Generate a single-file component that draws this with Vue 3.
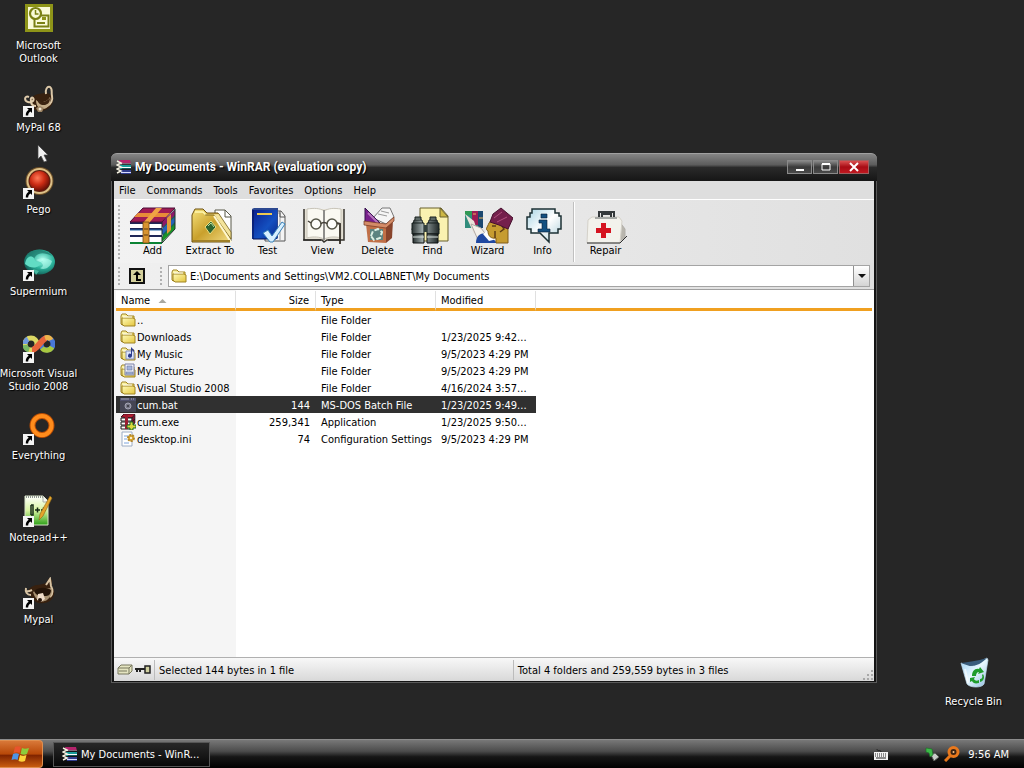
<template>
  <div class="screen">
    <!-- Shared icon shapes -->
    <svg class="sprite" aria-hidden="true">
      <defs>
        <linearGradient id="g-folder" x1="0" y1="0" x2="1" y2="1">
          <stop offset="0" stop-color="#fffbb8" /><stop offset="1" stop-color="#e3c43c" />
        </linearGradient>
        <linearGradient id="g-gold" x1="0" y1="0" x2="1" y2="1">
          <stop offset="0" stop-color="#f6e27c" /><stop offset=".5" stop-color="#c9a02c" /><stop offset="1" stop-color="#f2dc84" />
        </linearGradient>
        <linearGradient id="g-blue" x1="0" y1="0" x2="1" y2="1">
          <stop offset="0" stop-color="#0a1c8c" /><stop offset=".6" stop-color="#1450c0" /><stop offset="1" stop-color="#0a2a8c" />
        </linearGradient>
        <radialGradient id="g-red" cx=".4" cy=".35" r=".7">
          <stop offset="0" stop-color="#ff7a58" /><stop offset=".5" stop-color="#cc2c14" /><stop offset="1" stop-color="#5c0c04" />
        </radialGradient>
        <radialGradient id="g-teal" cx=".6" cy=".4" r=".7">
          <stop offset="0" stop-color="#b4fff0" /><stop offset=".5" stop-color="#2cb49c" /><stop offset="1" stop-color="#0c4c48" />
        </radialGradient>
        <linearGradient id="g-green" x1="0" y1="0" x2="0" y2="1">
          <stop offset="0" stop-color="#ffffff" /><stop offset=".5" stop-color="#d8f4a0" /><stop offset="1" stop-color="#2ca018" />
        </linearGradient>
        <linearGradient id="g-info" x1="0" y1="0" x2="1" y2="1">
          <stop offset="0" stop-color="#a8d4e4" /><stop offset=".5" stop-color="#ffffff" /><stop offset="1" stop-color="#a8ccd8" />
        </linearGradient>
        <linearGradient id="g-metal" x1="0" y1="0" x2="1" y2="0">
          <stop offset="0" stop-color="#2c3434" /><stop offset=".4" stop-color="#a0acac" /><stop offset="1" stop-color="#202828" />
        </linearGradient>
        <linearGradient id="g-bin" x1="0" y1="0" x2="1" y2="1">
          <stop offset="0" stop-color="#9cd0f4" /><stop offset=".5" stop-color="#e8f8ff" /><stop offset="1" stop-color="#8cb8dc" />
        </linearGradient>
      </defs>

      <!-- desktop icons, 32x32 -->
      <symbol id="outlook" viewBox="0 0 32 32">
        <rect x="2" y="1" width="28" height="28" fill="#8e9418" />
        <rect x="5" y="4" width="22" height="22" fill="#fafad8" />
        <rect x="11.500" y="12.500" width="14" height="11" fill="#fafad8" stroke="#7a8014" stroke-width="2" />
        <rect x="19" y="14" width="4" height="3" fill="#8e9418" />
        <path d="M14 20h8" stroke="#7a8014" stroke-width="2" />
        <circle cx="12.500" cy="10.500" r="5.500" fill="#fafad8" stroke="#7a8014" stroke-width="2.200" />
        <path d="M12.500 7v4h3" fill="none" stroke="#7a8014" stroke-width="1.500" />
      </symbol>
      <symbol id="raccoon" viewBox="0 0 32 32">
        <path d="M8 13c5-5 10-4 14-5 5 0 9 3 8 8-1 7-8 11-16 10-5-2-8-7-6-13z" fill="#38210f" />
        <path d="M23 9c-1-4 1-8 4-7 3 2 1 5 2 9 1 4-1 8-5 10" fill="none" stroke="#dcc8a8" stroke-width="2" />
        <path d="M6 12c-5-2-5 4-1 5 4 1 7-2 5-4-1-1-3 0-2 3 0 3 2 5 5 5" fill="none" stroke="#e0ccac" stroke-width="2" />
        <path d="M13 15c5 4 11 2 14-3 2 6-2 12-7 12-4 0-7-3-7-9z" fill="#c4ac88" />
        <path d="M14 14c4 5 9 3 13-1 0 5-3 7-6 7-4 0-6-2-7-6z" fill="#3c2412" />
        <path d="M13 23l4-2 4 2-2 4h-4z" fill="#9c8464" /><circle cx="17" cy="24" r="1.500" fill="#f0e4d0" />
      </symbol>
      <symbol id="raccoon-dark" viewBox="0 0 32 32">
        <path d="M6 12c6-6 11-3 17-6l3-5 3 2v7c4 5 2 10-1 13-4 4-11 4-15 2-4-3-7-7-7-13z" fill="#38210f" />
        <path d="M23 8l4-6 1 7c2 4 2 8-1 11" fill="none" stroke="#d8c4a4" stroke-width="2" />
        <path d="M3 11c-1 4 1 7 5 7M3 14c3 1 4 0 6-1" fill="none" stroke="#d8c4a4" stroke-width="2" />
        <path d="M10 15c6-5 15-3 18-4 2 5 0 9-4 12-5 3-11 2-14-8z" fill="#a89070" />
        <path d="M11 14c5-4 12-4 17-1 0 5-3 6-6 6-4 0-8 1-11-5z" fill="#241408" />
        <path d="M15 17l5-1 2 6-4 3-4-2z" fill="#f0dcc8" /><circle cx="17" cy="23" r="2" fill="#241408" />
      </symbol>
      <symbol id="pego" viewBox="0 0 32 32">
        <circle cx="16.500" cy="14" r="14" fill="#6e5028" /><circle cx="16.500" cy="14" r="13" fill="#dcc088" />
        <circle cx="16.500" cy="14" r="11" fill="#5c2010" /><circle cx="16.500" cy="14" r="10" fill="url(#g-red)" />
      </symbol>
      <symbol id="supermium" viewBox="0 0 32 32">
        <ellipse cx="16.500" cy="13" rx="15.500" ry="12.500" fill="url(#g-teal)" />
        <path d="M4 5C10 0 23-1 29 7c-8-4-15-4-18 3z" fill="#1f7468" opacity=".7" />
        <path d="M2 15c1-8 7-9 9-6 1 4 4 5 9 3-3 7-11 9-18 3z" fill="#62dcc4" />
        <path d="M13 11c6-3 12-2 16 1-2 8-9 9-12 7 4-1 5-5-4-8z" fill="#b8fff0" opacity=".6" />
        <path d="M10 20l6 2-3 4" fill="#48b8a0" />
      </symbol>
      <symbol id="vstudio" viewBox="0 0 32 32">
        <circle cx="8" cy="13" r="6" fill="none" stroke="#dcd864" stroke-width="5" />
        <path d="M2 13a6 6 0 0 1 3-5" stroke="#7098dc" stroke-width="5" fill="none" />
        <path d="M2 14a6 6 0 0 0 4 5" stroke="#78b864" stroke-width="5" fill="none" />
        <circle cx="24" cy="13" r="6" fill="none" stroke="#4878d8" stroke-width="5" />
        <path d="M29 16a6 6 0 0 1-10 1" fill="none" stroke="#a8c840" stroke-width="5" />
        <path d="M9 19c5 0 10-12 15-12" fill="none" stroke="#e8643c" stroke-width="6" />
        <path d="M22 7c3-1 5 0 6 2" fill="none" stroke="#ecb44c" stroke-width="5" />
      </symbol>
      <symbol id="everything" viewBox="0 0 32 32">
        <circle cx="19" cy="12.500" r="9.500" fill="none" stroke="#b84c04" stroke-width="6" />
        <circle cx="19" cy="12.500" r="9.500" fill="none" stroke="#ff8c1c" stroke-width="4" />
      </symbol>
      <symbol id="notepad" viewBox="0 0 32 32">
        <path d="M2 1h18l5 5v24H2z" fill="url(#g-green)" stroke="#d8e4c8" />
        <path d="M3 2h17" stroke="#909890" stroke-width="2" stroke-dasharray="1 1" />
        <path d="M20 1v6h5" fill="#f4f4f4" stroke="#a8b0a0" />
        <path d="M8 10v10M8 10h2v10h-2" stroke="#182c18" stroke-width="1.500" fill="none" />
        <path d="M12 15h5M14.500 12.500v5M18 15h5M20.500 12.500v5" stroke="#142814" stroke-width="1.500" />
        <path d="M27 1l2 2-9 18-4 4 1-6z" fill="#e4a42c" stroke="#8c6818" stroke-width=".6" />
      </symbol>
      <symbol id="shortcut" viewBox="0 0 11 11">
        <path d="M0 0h11v11H0z" fill="#f4f4f4" />
        <path d="M4 2h5v5L7.500 5.500C6 6.500 5 8 5.200 9.500H2.800C2.500 7 4 5 5.700 3.800z" fill="#000" />
      </symbol>
      <symbol id="recycle" viewBox="0 0 32 32">
        <path d="M3 6l9 3c7 0 10-5 17-8l1 2-4 24c-2 4-14 4-17 0z" fill="url(#g-bin)" stroke="#c4e0f0" stroke-width=".7" />
        <path d="M3 6c7-1 16-2 26-5-5 5-10 8-17 8z" fill="#385c7c" />
        <path d="M14 19c0-5 3-8 7-7l1-2 4 5-6 2 1-2c-2 0-3 2-3 4zM25 17c2 3 1 7-3 8v-3c2 0 3-2 2-4zM12 21l5-1-1 2c1 2 3 2 5 1v3c-4 1-6 0-7-2l-2 1z" fill="#1f9c2c" />
        <path d="M7 12l3 14" stroke="#fff" stroke-width="2" opacity=".6" />
      </symbol>

      <!-- toolbar icons, 50x38 -->
      <symbol id="tb-add" viewBox="0 0 50 38">
        <path d="M35 33l12-13V3L35 16z" fill="#1c6450" />
        <path d="M2 30h33v7H2zM2 23h33v7H2zM2 16h33v7H2z" fill="#fff" />
        <path d="M34 36l13-13v-5L34 31" fill="#189428" /><path d="M34 29l13-13v-5L34 23z" fill="#2460b8" /><path d="M34 22L47 9V4L34 16z" fill="#8c1868" />
        <path d="M2 17h32M2 23h32M2 30h32" stroke="#202858" stroke-width="2" />
        <path d="M2 24h32" stroke="#2468a8" stroke-width="1" /><path d="M2 37h32" stroke="#0c8434" stroke-width="2" />
        <path d="M2 16L15 2h32L34 16z" fill="#a01c54" stroke="#4c0c38" />
        <path d="M6 11h32l4-4H10z" fill="#e88c38" />
        <path d="M15 17L28 2h6L21 17z" fill="#f0a444" /><path d="M15 16h6v21h-6z" fill="#d89430" stroke="#784810" stroke-width=".8" />
        <path d="M39 12l4-4v16l-4 4z" fill="#e09838" /><path d="M34 16v21M34 37L47 23V3" fill="none" stroke="#20302c" />
        <path d="M16 23h4M16 29h4" stroke="#5c3c10" />
      </symbol>
      <symbol id="tb-extract" viewBox="0 0 50 38">
        <path d="M30 4h10l6 6v25H30z" fill="#fff" stroke="#585848" /><path d="M40 4v7h6" fill="none" stroke="#585848" />
        <path d="M7 9l3-6h8l4 4h11l12 21v8H7z" fill="url(#g-gold)" stroke="#6c5010" />
        <path d="M10 6h8l3 3" fill="none" stroke="#fff8b0" stroke-width="1.500" />
        <path d="M20 9h9l17 24v-7L34 8" fill="#f4e49c" stroke="#74601c" stroke-width=".8" />
        <path d="M46 36L29 10" stroke="#fff8d0" stroke-width="2" />
        <path d="M20 21l6-6 5 6-6 7z" fill="#2c6430" stroke="#e8dc80" /><path d="M23 20l3-3 3 4" stroke="#b8dc9c" fill="none" />
        <path d="M8 35h37" stroke="#a08028" stroke-width="2" />
      </symbol>
      <symbol id="tb-test" viewBox="0 0 50 38">
        <path d="M22 5h16l4 5v25H22z" fill="#f4f4f4" stroke="#555" /><path d="M27 7h10v27" fill="none" stroke="#999" /><path d="M37 5v6h5" fill="none" stroke="#555" />
        <path d="M9 3h25v30H9z" fill="url(#g-blue)" /><path d="M9 3l2-1h24v30l-1 1V4H9" fill="#2c4890" />
        <path d="M14 8h15" stroke="#ecc850" stroke-width="2" /><path d="M10 4v29h23" fill="none" stroke="#071050" />
        <path d="M20 27l5-3 4 6 10-14 3 2-12 18h-3z" fill="#d8f0ff" stroke="#3880b8" />
      </symbol>
      <symbol id="tb-view" viewBox="0 0 50 38">
        <path d="M6 3v31h18l2 2 3-2h17V3" fill="#e4e0d4" stroke="#35322d" stroke-width="1.500" />
        <path d="M9 3c7-1 13-1 17 2v28c-4-2-10-3-17-1zM43 3c-7-1-12-1-17 2v28c5-2 10-3 17-1z" fill="#faf9f2" stroke="#c8c4b8" />
        <path d="M26 4v30" stroke="#777" stroke-width="1.500" />
        <circle cx="18" cy="18" r="5" fill="#fff" fill-opacity=".6" stroke="#555548" stroke-width="1.500" />
        <circle cx="34" cy="18" r="5" fill="#fff" fill-opacity=".6" stroke="#555548" stroke-width="1.500" />
        <path d="M23 18c1-2 5-2 6 0M13 17l-3-2" fill="none" stroke="#454038" stroke-width="1.500" />
        <path d="M39 17l3 1v20" fill="none" stroke="#454038" stroke-width="2" />
        <path d="M5 34h18M30 34h13" stroke="#161616" />
      </symbol>
      <symbol id="tb-delete" viewBox="0 0 50 38">
        <path d="M20 12L29 2h8l4 9-8 7z" fill="#f5f5f5" stroke="#777" /><path d="M28 5l8 2M25 8l9 2" stroke="#999" />
        <path d="M12 18V2l15 15z" fill="#78208c" stroke="#34104c" /><path d="M15 7l10 10" stroke="#b474bc" stroke-width="2" />
        <path d="M13 18l20 2v17l-18-1z" fill="#c07048" /><path d="M33 20l7-6-1 18-6 5z" fill="#88442c" />
        <path d="M11 15l22 3 8-7v4l-8 7-22-3z" fill="#d48c68" stroke="#743820" stroke-width=".7" />
        <path d="M17 23h13v11H17z" fill="#5c8480" /><path d="M18 30l2-5 5-2 4 3-2 6-6 2z" fill="none" stroke="#ddf0e4" stroke-width="2" stroke-dasharray="5 2" />
      </symbol>
      <symbol id="tb-find" viewBox="0 0 50 38">
        <path d="M12 2h21l7 8v25H12z" fill="#faf2b0" stroke="#69602c" /><path d="M32 2v9h8z" fill="#cdb744" stroke="#69602c" />
        <path d="M6 14h8l2 10H4zM21 14h8l2 10H19z" fill="url(#g-metal)" stroke="#18201f" />
        <path d="M7 14v-3h6v3M22 14v-3h6v3" fill="#5b6765" stroke="#18201f" />
        <path d="M4 17h12v11H4zM19 17h12v11H19z" fill="url(#g-metal)" stroke="#17201e" /><path d="M16 19h3v7h-3z" fill="#323f3c" />
        <path d="M5 28h11v9H5zM19 28h11v9H19z" fill="url(#g-metal)" stroke="#0b0f0f" /><path d="M5 31h11M19 31h11" stroke="#dce4df" />
      </symbol>
      <symbol id="tb-wizard" viewBox="0 0 50 38">
        <path d="M2 5h18v17H2z" fill="#308c7c" /><path d="M2 5h7v4H2z" fill="#309854" /><path d="M9 5h6v14H9z" fill="#9c1c54" /><path d="M15 5h5v17h-5z" fill="#1c4870" /><path d="M10 8h3M16 12h4" stroke="#ecb458" />
        <path d="M2 8l9 20 3-4-3-9z" fill="#eae2da" /><path d="M8 18l10 4 6 8-9 4z" fill="#f4f0ea" stroke="#b0a8a4" />
        <path d="M13 37c0-9 7-11 13-9l8 9z" fill="#2048a0" /><path d="M20 28l9-7 5 12-8 2z" fill="#fff" />
        <path d="M26 17c-2 5-4 6-1 8 0 5 3 8 8 7v5h12V15l-14-4z" fill="#c69c30" stroke="#805c18" />
        <path d="M29 20h4M32 25v7M38 18l3 5-4 3" stroke="#5c3c14" stroke-width="1.500" fill="none" />
        <path d="M27 16l3-8 8-6 12 10-5 11-9-4z" fill="#74204c" stroke="#46102e" /><path d="M31 12l8-6M34 16l10-5" stroke="#b0507c" stroke-width="1" />
      </symbol>
      <symbol id="tb-info" viewBox="0 0 50 38">
        <path d="M14 7V3h23v4h4v3h2v13h-3v4h-9v9l-9-9h-9v-4H9V11h3V7z" fill="url(#g-info)" stroke="#1c3034" stroke-width="1.500" />
        <path d="M23 8h6v4h-6zM21 14h8v9h3v3H20v-3h4v-6h-3z" fill="#145080" stroke="#081c34" stroke-width=".6" />
      </symbol>
      <symbol id="tb-repair" viewBox="0 0 50 38">
        <path d="M38 15l6 8v8l-7 6z" fill="#b9b6ae" stroke="#b0aea8" /><path d="M7 14l4-3h27l3 4-2 22H6z" fill="#f3f2ec" stroke="#d4d1c9" />
        <path d="M18 11V6h15v5M21 11V8h9v3" fill="none" stroke="#33383a" stroke-width="2" />
        <path d="M14 12h22" stroke="#a4a7a4" stroke-width="2" /><path d="M6 37h33l7-7" stroke="#2d2d2d" stroke-width="1" fill="none" />
        <path d="M20 17h5v5h5v5h-5v5h-5v-5h-5v-5h5z" fill="#d51420" />
      </symbol>

      <!-- small icons, 16x16 -->
      <symbol id="winrar" viewBox="0 0 16 16">
        <path d="M3 1h11l1 4H4z" fill="#b4246c" /><path d="M4 4h11v1H4z" fill="#f4c4d8" />
        <path d="M4 6h11v4H4z" fill="#189c98" /><path d="M5 8h10v1H5z" fill="#fff" />
        <path d="M4 11h11v4H5z" fill="#303c8c" /><path d="M5 13h10v1H5z" fill="#d8dcff" />
        <path d="M1 2l4 2-4 2 4 2-4 2 4 2-4 2" fill="none" stroke="#f4f0e0" stroke-width="1.500" /><path d="M6 5h9M6 10h9" stroke="#101018" />
      </symbol>
      <symbol id="folder" viewBox="0 0 16 16">
        <path d="M1 4l1-2h4l2 2h6v9H2l-1-1z" fill="url(#g-folder)" stroke="#a08424" /><path d="M2 6h11l2 1v7H4l-2-2z" fill="url(#g-folder)" stroke="#a08424" /><path d="M3 5h9" stroke="#fff" />
      </symbol>
      <symbol id="music" viewBox="0 0 16 16">
        <use href="#folder" /><path d="M6 5h8v8H6z" fill="#dce4fc" stroke="#8490b8" /><path d="M11 10V1l3 3v2l-2-2v6a2 2 0 1 1-1-2z" fill="#2c3c8c" />
      </symbol>
      <symbol id="pictures" viewBox="0 0 16 16">
        <use href="#folder" /><path d="M5 1h9v11H5z" fill="#eef0fc" stroke="#7c80a4" /><path d="M7 3h5v4H7zM6 9h7v2H6z" fill="#a4b4dc" stroke="#6c789c" stroke-width=".6" />
      </symbol>
      <symbol id="bat" viewBox="0 0 16 16">
        <path d="M0 1h16v14H0z" fill="#454554" /><path d="M0 1h16v3H0z" fill="#50506c" /><path d="M1 2h8" stroke="#9c9cac" /><path d="M11 2h4" stroke="#acacbc" stroke-dasharray="1 1" />
        <circle cx="8" cy="9" r="3" fill="#787888" stroke="#a4a4b4" /><circle cx="8" cy="9" r="1" fill="#303038" />
      </symbol>
      <symbol id="exe" viewBox="0 0 16 16">
        <path d="M1 3l3-3h11l-3 4z" fill="#b81c30" stroke="#44081c" /><path d="M1 4h11v3H1zM1 8h11v3H1zM1 12h11v3H1z" fill="#fff" stroke="#1c1c1c" />
        <path d="M12 4l3-3v4l-3 3zM12 8l3-3v4l-3 3z" fill="#7c1430" stroke="#1c1c1c" stroke-width=".6" /><path d="M5 1h3v14H5z" fill="#9c1c30" />
        <path d="M7 11h3V8h3v3h3v3h-3v2h-3v-2H7z" fill="#dcd83c" stroke="#1c6c20" />
      </symbol>
      <symbol id="ini" viewBox="0 0 16 16">
        <path d="M2 1h10v14H2z" fill="#fff" stroke="#9cacc4" /><path d="M4 5h5M4 8h3M4 12h5" stroke="#7ca4dc" />
        <circle cx="11" cy="7" r="3" fill="#dca82c" stroke="#b4882c" stroke-dasharray="2 1" stroke-width="2" /><circle cx="11" cy="7" r="1" fill="#fff" />
      </symbol>
      <symbol id="magnifier" viewBox="0 0 16 16">
        <circle cx="9.500" cy="6" r="4.500" fill="#3c2414" stroke="#e8781c" stroke-width="3" /><path d="M6 10l-5 5" stroke="#e8781c" stroke-width="3" /><circle cx="9.500" cy="6" r="1" fill="#ffc484" />
      </symbol>
      <symbol id="usb" viewBox="0 0 14 14">
        <path d="M6 8l4-2 4 4-5 4z" fill="#c8ccc8" stroke="#585c58" /><path d="M1 1l6 1 1 6-3 2-1-4-3-1z" fill="#3cb848" stroke="#186c24" stroke-width=".6" />
      </symbol>
      <symbol id="keyboard" viewBox="0 0 16 12">
        <path d="M8 4c0-3-4 0-4-3" fill="none" stroke="#222" /><path d="M1 4h14v8H1z" fill="#f2f2f2" />
        <path d="M2 6h12M2 8h12" stroke="#222" stroke-dasharray="1 1" /><path d="M3 10h10" stroke="#222" />
      </symbol>
      <symbol id="flag" viewBox="0 0 20 20">
        <path d="M4 3c2-1 4-1 6 0L8.500 9C7 8 5 8 2.500 9z" fill="#e8542c" /><path d="M11 4c2 1 4 1 7 0l-2 6c-2 1-4 1-6.500 0z" fill="#8ccc3c" />
        <path d="M2 10c2-1 4-1 6 0l-1.500 6C5 15 3 15 .500 16z" fill="#4c94e8" /><path d="M9 11c2 1 4 1 6.500 0L14 17c-2 1-4 1-6.500 0z" fill="#fcd43c" />
      </symbol>
    </svg>

    <main class="desktop">
      <div class="shortcuts">
        <a v-for="item in shortcuts" :key="item.name" class="shortcut" href="#" @click.prevent>
          <span class="shortcut-picture">
            <svg class="icon-large"><use :href="'#' + item.icon" /></svg>
            <svg v-if="item.link" class="arrow"><use href="#shortcut" /></svg>
          </span>
          <span class="shortcut-name">{{ item.name }}</span>
        </a>
      </div>

      <a class="shortcut recycle-bin" href="#" @click.prevent>
        <span class="shortcut-picture"><svg class="icon-large"><use href="#recycle" /></svg></span>
        <span class="shortcut-name">Recycle Bin</span>
      </a>

      <section class="window">
        <header class="titlebar">
          <svg class="icon-small"><use href="#winrar" /></svg>
          <h1>My Documents - WinRAR (evaluation copy)</h1>
          <div class="controls">
            <button type="button" aria-label="Minimize"><svg viewBox="0 0 12 10"><path d="M2 8h8" stroke="#fff" stroke-width="2" /></svg></button>
            <button type="button" aria-label="Maximize"><svg viewBox="0 0 12 10"><path d="M2 2h8v6H2z" fill="none" stroke="#fff" /><path d="M2 2h8" stroke="#fff" stroke-width="2" /></svg></button>
            <button type="button" class="close" aria-label="Close"><svg viewBox="0 0 12 10"><path d="M2 1l8 8M10 1L2 9" stroke="#fff" stroke-width="2" /></svg></button>
          </div>
        </header>

        <div class="window-body">
          <nav class="menubar">
            <button v-for="menu in menus" :key="menu" type="button">{{ menu }}</button>
          </nav>

          <div class="toolbar">
            <i class="grip"></i>
            <template v-for="tool in tools" :key="tool.name">
              <i v-if="tool.name === 'Repair'" class="separator"></i>
              <button type="button" :class="{ wide: tool.name === 'Extract To' }">
                <svg class="icon-tool"><use :href="'#' + tool.icon" /></svg>
                <span>{{ tool.name }}</span>
              </button>
            </template>
          </div>

          <div class="addressbar">
            <i class="grip"></i>
            <button type="button" class="up" aria-label="Up one level">
              <svg viewBox="0 0 16 16"><path d="M1 1h14v14H1z" fill="#d4d09c" stroke="#111" stroke-width="2" /><path d="M8 3l4 4H9v4h3v2H7V7H4z" fill="#000" /></svg>
            </button>
            <i class="grip"></i>
            <div class="path">
              <svg class="icon-small"><use href="#folder" /></svg>
              <input v-model="path" type="text" aria-label="Path" />
              <button type="button" aria-label="Show path history"><svg viewBox="0 0 8 4"><path d="M0 0h8L4 4z" fill="#111" /></svg></button>
            </div>
          </div>

          <div class="files">
            <table>
              <colgroup>
                <col class="col-name" /><col class="col-size" /><col class="col-type" /><col class="col-date" /><col />
              </colgroup>
              <thead>
                <tr>
                  <th>Name <svg class="sort" viewBox="0 0 10 5"><path d="M0 5l5-5 5 5z" fill="#a8a8a0" /></svg></th>
                  <th class="number">Size</th>
                  <th>Type</th>
                  <th>Modified</th>
                  <th></th>
                </tr>
              </thead>
              <tbody>
                <tr v-for="file in files" :key="file.name" :class="{ selected: file.name === selected }" @click="selected = file.name">
                  <td class="name"><span><svg class="icon-small"><use :href="'#' + file.icon" /></svg>{{ file.name }}</span></td>
                  <td class="number">{{ file.size }}</td>
                  <td>{{ file.type }}</td>
                  <td>{{ file.modified }}</td>
                  <td class="rest"></td>
                </tr>
              </tbody>
            </table>
          </div>

          <footer class="statusbar">
            <div class="status-icons">
              <svg viewBox="0 0 16 12"><path d="M1 4l3-3h11v6l-3 3H1z" fill="#e4e4c0" stroke="#77775c" /><path d="M1 4h11l3-3M12 4v6M2 7h8" stroke="#77775c" fill="none" /></svg>
              <svg viewBox="0 0 16 12"><path d="M0 5h10M2 5v3M5 5v3" stroke="#222" stroke-width="2" /><path d="M10 2h5v7h-5z" fill="#d0d0a0" stroke="#222" stroke-width="1.500" /></svg>
            </div>
            <div class="status-text">Selected 144 bytes in 1 file</div>
            <div class="status-text total">Total 4 folders and 259,559 bytes in 3 files</div>
            <svg class="resize" viewBox="0 0 12 12"><path d="M9 1h2v2H9zM9 5h2v2H9zM9 9h2v2H9zM5 5h2v2H5zM5 9h2v2H5zM1 9h2v2H1z" fill="#a8a8a8" /></svg>
          </footer>
        </div>
      </section>

      <svg class="cursor" viewBox="0 0 12 19"><path d="M1 1v14l3-3 3 6 3-1-3-6h4z" fill="#f0f0f0" stroke="#444" stroke-width=".7" /></svg>
    </main>

    <footer class="taskbar">
      <button type="button" class="start" aria-label="Start"><svg><use href="#flag" /></svg></button>
      <button type="button" class="task"><svg class="icon-small"><use href="#winrar" /></svg>My Documents - WinR...</button>
      <div class="tray">
        <svg class="keyboard"><use href="#keyboard" /></svg>
        <svg class="usb"><use href="#usb" /></svg>
        <svg class="icon-small"><use href="#magnifier" /></svg>
        <time>9:56 AM</time>
      </div>
    </footer>
  </div>
</template>

<script setup>
import { ref } from 'vue';

const shortcuts = [
  { name: 'Microsoft\nOutlook', icon: 'outlook', link: false },
  { name: 'MyPal 68', icon: 'raccoon', link: true },
  { name: 'Pego', icon: 'pego', link: true },
  { name: 'Supermium', icon: 'supermium', link: true },
  { name: 'Microsoft Visual\nStudio 2008', icon: 'vstudio', link: true },
  { name: 'Everything', icon: 'everything', link: true },
  { name: 'Notepad++', icon: 'notepad', link: true },
  { name: 'Mypal', icon: 'raccoon-dark', link: true }
];

const menus = ['File', 'Commands', 'Tools', 'Favorites', 'Options', 'Help'];

const tools = [
  { name: 'Add', icon: 'tb-add' },
  { name: 'Extract To', icon: 'tb-extract' },
  { name: 'Test', icon: 'tb-test' },
  { name: 'View', icon: 'tb-view' },
  { name: 'Delete', icon: 'tb-delete' },
  { name: 'Find', icon: 'tb-find' },
  { name: 'Wizard', icon: 'tb-wizard' },
  { name: 'Info', icon: 'tb-info' },
  { name: 'Repair', icon: 'tb-repair' }
];

const files = ref([
  { name: '..', icon: 'folder', size: '', type: 'File Folder', modified: '' },
  { name: 'Downloads', icon: 'folder', size: '', type: 'File Folder', modified: '1/23/2025 9:42...' },
  { name: 'My Music', icon: 'music', size: '', type: 'File Folder', modified: '9/5/2023 4:29 PM' },
  { name: 'My Pictures', icon: 'pictures', size: '', type: 'File Folder', modified: '9/5/2023 4:29 PM' },
  { name: 'Visual Studio 2008', icon: 'folder', size: '', type: 'File Folder', modified: '4/16/2024 3:57...' },
  { name: 'cum.bat', icon: 'bat', size: '144', type: 'MS-DOS Batch File', modified: '1/23/2025 9:49...' },
  { name: 'cum.exe', icon: 'exe', size: '259,341', type: 'Application', modified: '1/23/2025 9:50...' },
  { name: 'desktop.ini', icon: 'ini', size: '74', type: 'Configuration Settings', modified: '9/5/2023 4:29 PM' }
]);

const selected = ref('cum.bat');
const path = ref('E:\\Documents and Settings\\VM2.COLLABNET\\My Documents');
</script>

<style>
body {
  background: #262626;
}
</style>

<style scoped>
.screen {
  display: flex;
  flex-direction: column;
  height: 100vh;
  overflow: hidden;
  background: #262626;
  color: #000;
  font: 11px/13px Tahoma, "DejaVu Sans Condensed", "Noto Sans", sans-serif;
}

.screen * {
  box-sizing: border-box;
}

button, input {
  margin: 0;
  padding: 0;
  border: 0;
  background: none;
  color: inherit;
  font: inherit;
}

svg {
  display: block;
  flex: none;
}

.sprite {
  position: absolute;
  width: 0;
  height: 0;
}

.icon-small {
  width: 16px;
  height: 16px;
}

.icon-large {
  width: 32px;
  height: 32px;
}

/* Desktop */
.desktop {
  position: relative;
  flex: 1;
  min-height: 0;
}

.shortcuts {
  display: flex;
  flex-direction: column;
  width: 77px;
  padding-top: 3px;
}

.shortcut {
  display: flex;
  flex-direction: column;
  align-items: center;
  gap: 4px;
  width: 77px;
  height: 82px;
  color: #fff;
  text-align: center;
  text-decoration: none;
}

.shortcut-picture {
  position: relative;
}

.arrow {
  position: absolute;
  left: 0;
  bottom: 0;
  width: 11px;
  height: 11px;
}

.shortcut-name {
  text-shadow: 1px 1px 1px #000;
  white-space: pre;
}

.recycle-bin {
  position: absolute;
  right: 12px;
  bottom: 0;
  gap: 6px;
}

.cursor {
  position: absolute;
  left: 37px;
  top: 144px;
  width: 12px;
  height: 19px;
}

/* Window */
.window {
  position: absolute;
  top: 153px;
  right: 147px;
  bottom: 56px;
  left: 111px;
  display: flex;
  flex-direction: column;
  padding: 0 3px 2px;
  border-radius: 6px 6px 0 0;
  background: #141414;
  box-shadow: inset 0 0 0 1px #5a5a5a;
}

.titlebar {
  display: flex;
  align-items: center;
  gap: 3px;
  height: 28px;
  margin: 0 -3px;
  padding: 0 8px 1px 5px;
  border-top: 1px solid #a0a0a0;
  border-radius: 6px 6px 0 0;
  background: linear-gradient(#858585, #5c5c5c 40%, #2a2a2a 50%, #161616);
  color: #fff;
}

h1 {
  flex: 1;
  margin: 0;
  font: bold 12px/16px Roboto, "Noto Sans", sans-serif;
  text-shadow: 1px 1px 1px #000;
}

.controls {
  display: flex;
  gap: 1px;
}

.controls button {
  display: flex;
  align-items: center;
  justify-content: center;
  width: 25px;
  height: 14px;
  border: 1px solid #8a8a8a;
  background: linear-gradient(#888, #3a3a3a 50%, #4a4a4a);
}

.controls .close {
  width: 30px;
  border-color: #a06060;
  background: linear-gradient(#d85050, #a80c14 50%, #c01820);
}

.controls svg {
  width: 12px;
  height: 10px;
}

.window-body {
  display: flex;
  flex: 1;
  flex-direction: column;
  min-height: 0;
  background: #e4e4e4;
}

.menubar {
  display: flex;
  align-items: center;
  gap: 11px;
  height: 19px;
  padding-left: 5px;
  border-bottom: 1px solid #fff;
  background: #dedede;
}

.toolbar {
  display: flex;
  align-items: center;
  height: 63px;
  padding: 0 4px;
  background: linear-gradient(90deg, #f2f2f2, #e0e0e0);
}

.toolbar button {
  display: flex;
  flex-direction: column;
  align-items: center;
  width: 55px;
}

.toolbar .wide {
  width: 60px;
}

.icon-tool {
  width: 50px;
  height: 38px;
}

.grip {
  width: 2px;
  height: 54px;
  margin-right: 5px;
  background: repeating-linear-gradient(#b0b0b0 0 2px, transparent 2px 4px);
}

.separator {
  width: 2px;
  height: 60px;
  margin: 0 3px;
  border-left: 1px solid #c0c0c0;
  border-right: 1px solid #fff;
}

.addressbar {
  display: flex;
  align-items: center;
  height: 27px;
  padding: 0 4px;
  border-bottom: 1px solid #a0a0a0;
  background: linear-gradient(90deg, #f0f0f0, #dfdfdf);
}

.addressbar .grip {
  height: 18px;
}

.up {
  width: 16px;
  margin: 0 15px 0 4px;
}

.path {
  display: flex;
  flex: 1;
  align-items: center;
  gap: 3px;
  height: 22px;
  margin-left: 1px;
  padding-left: 2px;
  border: 1px solid #a4a4a4;
  background: #fff;
}

.path input {
  flex: 1;
  min-width: 0;
  outline: 0;
}

.path button {
  display: flex;
  align-items: center;
  justify-content: center;
  width: 16px;
  height: 20px;
  border-left: 1px solid #909090;
  background: linear-gradient(#fff, #d4d4d4);
}

.path button svg {
  width: 8px;
  height: 4px;
}

.files {
  flex: 1;
  min-height: 0;
  padding: 1px 2px 0;
  overflow: hidden;
  background: linear-gradient(90deg, #f5f5f5 122px, #fff 122px);
}

table {
  width: 100%;
  border-collapse: separate;
  border-spacing: 0;
  table-layout: fixed;
}

.col-name, .col-type {
  width: 120px;
}

.col-size {
  width: 80px;
}

.col-date {
  width: 100px;
}

th {
  height: 20px;
  padding: 2px 5px 0;
  border-right: 1px solid #e0e0e0;
  border-bottom: 3px solid #f0a020;
  background: #fff;
  font-weight: normal;
  text-align: left;
}

th:last-child {
  border-right: 0;
}

.sort {
  display: inline-block;
  width: 9px;
  height: 4px;
  margin-left: 5px;
  vertical-align: middle;
}

td {
  height: 17px;
  padding: 1px 0 0 5px;
  white-space: nowrap;
}

th.number, td.number {
  padding-right: 6px;
  text-align: right;
}

td.name {
  padding-left: 4px;
}

.name span {
  display: flex;
  align-items: center;
  gap: 1px;
}

.selected td {
  background: #303030;
  color: #fff;
}

.selected .rest {
  background: none;
}

.statusbar {
  display: flex;
  align-items: center;
  height: 24px;
  padding-top: 1px;
  border-top: 1px solid #b0b0b0;
  background: linear-gradient(#f8f8f8, #d8d8d8);
}

.status-icons {
  display: flex;
  gap: 2px;
  padding: 0 3px;
}

.status-icons svg {
  width: 16px;
  height: 12px;
}

.status-text {
  flex: 36;
  padding: 4px 4px 3px;
  border-left: 1px solid #bcbcbc;
}

.status-text.total {
  flex: 35;
}

.resize {
  align-self: flex-end;
  width: 12px;
  height: 12px;
}

/* Taskbar */
.taskbar {
  display: flex;
  align-items: center;
  height: 29px;
  border-top: 1px solid #8c8c8c;
  background: linear-gradient(#787878, #4c4c4c 40%, #161616 60%, #000);
  color: #fff;
}

.start {
  display: flex;
  align-items: center;
  justify-content: center;
  width: 43px;
  height: 28px;
  border: 1px solid #e09050;
  border-left: 0;
  border-radius: 0 4px 4px 0;
  background: linear-gradient(#d87838, #b84808 50%, #802400 55%, #c85c10);
}

.start svg {
  width: 20px;
  height: 20px;
}

.task {
  display: flex;
  align-items: center;
  gap: 3px;
  width: 157px;
  height: 25px;
  margin-left: 10px;
  padding: 0 8px;
  border: 1px solid #565656;
  background: linear-gradient(#282828, #080808);
}

.tray {
  display: flex;
  align-items: center;
  margin-left: auto;
  padding-right: 15px;
}

.keyboard {
  width: 16px;
  height: 12px;
}

.usb {
  width: 14px;
  height: 14px;
  margin: 0 5px 0 36px;
}

.tray time {
  margin-left: 8px;
}
</style>
